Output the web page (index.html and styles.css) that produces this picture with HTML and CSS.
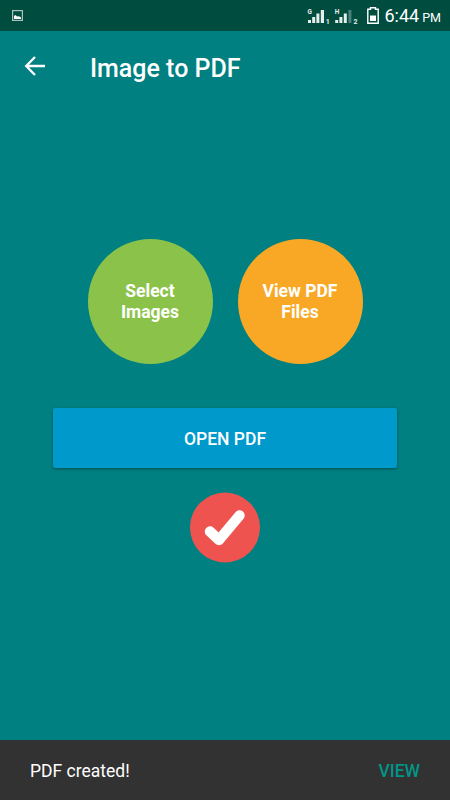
FILE: index.html
```html
<!DOCTYPE html>
<html lang="en">
<head>
  <meta charset="utf-8">
  <title>Image to PDF</title>
  <meta name="viewport" content="width=device-width, initial-scale=1">
  <link rel="stylesheet" href="styles.css">
</head>
<body>
  <div class="statusbar">
    <svg class="picture" width="11" height="11" viewBox="0 0 11 11">
      <rect x="0.6" y="0.6" width="9.8" height="9.8" fill="none" stroke="#a9c4bf" stroke-width="1.2"/>
      <path d="M2 9V6l1.5-1 1.5 1.5L7 6.2 9 7.5V9z" fill="#fff"/>
    </svg>
    <div class="status-right">
      <svg class="signals" width="52" height="18" viewBox="0 0 52 18">
        <g fill="#e6eeec">
          <path d="M1 14h3v3H1zM5.2 11h3v6h-3zM9.4 7.5h3V17h-3zM13.8 4h3.2v13h-3.2z"/>
          <path d="M28.2 14h3v3h-3zM32.4 11h3v6h-3zM36.8 7.5h3V17h-3z"/>
        </g>
        <path d="M41.4 4h3v13h-3z" fill="#4d827a"/>
        <text class="net" x="0.4" y="8">G</text>
        <text class="net" x="27.7" y="8">H</text>
        <text class="sim" x="18.8" y="17.5">1</text>
        <text class="sim" x="46.5" y="17.5">2</text>
      </svg>
      <svg class="battery" width="12" height="17" viewBox="0 0 12 17">
        <path d="M3.5 0.8h5v1.4h2.7v14H0.8v-14h2.7z" fill="none" stroke="#fff" stroke-width="1.4"/>
        <path d="M3 8.5h6V14H3z" fill="#fff"/>
      </svg>
      <div class="clock"><span>6:44</span><span class="ampm">PM</span></div>
    </div>
  </div>

  <div class="toolbar">
    <svg class="back" width="22" height="20" viewBox="0 0 22 20">
      <path d="M21 10H2.5M11 1L2.2 10l8.8 9" fill="none" stroke="#fff" stroke-width="2.3"/>
    </svg>
    <h1>Image to PDF</h1>
  </div>

  <div class="content">
    <div class="circles">
      <button class="circle green">Select<br>Images</button>
      <button class="circle orange">View PDF<br>Files</button>
    </div>
    <button class="open">OPEN PDF</button>
    <svg class="done" width="70" height="71" viewBox="0 0 70 71">
      <circle cx="35" cy="35.5" r="35" fill="#ef5350"/>
      <path d="M20 39.5l9 8.5L49.5 23.5" fill="none" stroke="#fff" stroke-width="10.5" stroke-linecap="round" stroke-linejoin="round"/>
    </svg>
  </div>

  <div class="snackbar">
    <span>PDF created!</span>
    <button class="view">VIEW</button>
  </div>
</body>
</html>
```

FILE: styles.css
```css
body {
    font-family: Roboto, "Liberation Sans", sans-serif;
    margin: 0;
    height: 800px;
    background-color: #008080;
    color: #fff;
    display: flex;
    flex-direction: column;
    overflow: hidden;
  }
button {
    font-family: inherit;
    color: inherit;
    border: none;
    padding: 0;
    cursor: pointer;
  }
svg {
    display: block;
    flex: none;
  }
.statusbar {
    height: 31px;
    box-sizing: border-box;
    padding: 0 9px 0 12px;
    background-color: #004d40;
    display: flex;
    align-items: center;
    justify-content: space-between;
  }
.status-right {
    display: flex;
    align-items: center;
  }
.signals {
    margin-right: 8px;
    margin-bottom: 1px;
  }
.net, .sim {
    font-size: 6.5px;
    font-weight: 700;
    fill: #e6eeec;
  }
.sim {
    font-size: 7px;
  }
.battery {
    margin-right: 5px;
  }
.clock {
    display: flex;
    align-items: baseline;
    gap: 3px;
    font-size: 18px;
    line-height: 31px;
    padding-top: 2px;
  }
.ampm {
    font-size: 12.5px;
  }
.toolbar {
    height: 70px;
    display: flex;
    align-items: center;
    padding-left: 24px;
  }
.toolbar h1 {
    margin: 5px 0 0 44px;
    font-size: 25px;
    font-weight: 500;
    line-height: 30px;
  }
.content {
    flex: 1;
    display: flex;
    flex-direction: column;
    align-items: center;
    padding-top: 138px;
  }
.circles {
    display: flex;
    gap: 25px;
  }
.circle {
    width: 125px;
    height: 125px;
    border-radius: 50%;
    padding-top: 1px;
    font-size: 17.5px;
    font-weight: 700;
    line-height: 21px;
  }
.green {
    background-color: #8bc34a;
  }
.orange {
    background-color: #f9a825;
  }
.open {
    width: 344px;
    height: 60px;
    margin: 44px 0 24px;
    padding-top: 2px;
    border-radius: 2px;
    background-color: #0099cc;
    box-shadow: 0 1px 3px rgba(0, 0, 0, 0.4);
    font-size: 17.5px;
    font-weight: 500;
  }
.snackbar {
    height: 60px;
    box-sizing: border-box;
    padding: 2px 30px 0;
    background-color: #323232;
    display: flex;
    align-items: center;
    justify-content: space-between;
    font-size: 17.5px;
  }
.view {
    background: none;
    color: #009688;
    font-size: 17.5px;
    font-weight: 500;
  }
```
